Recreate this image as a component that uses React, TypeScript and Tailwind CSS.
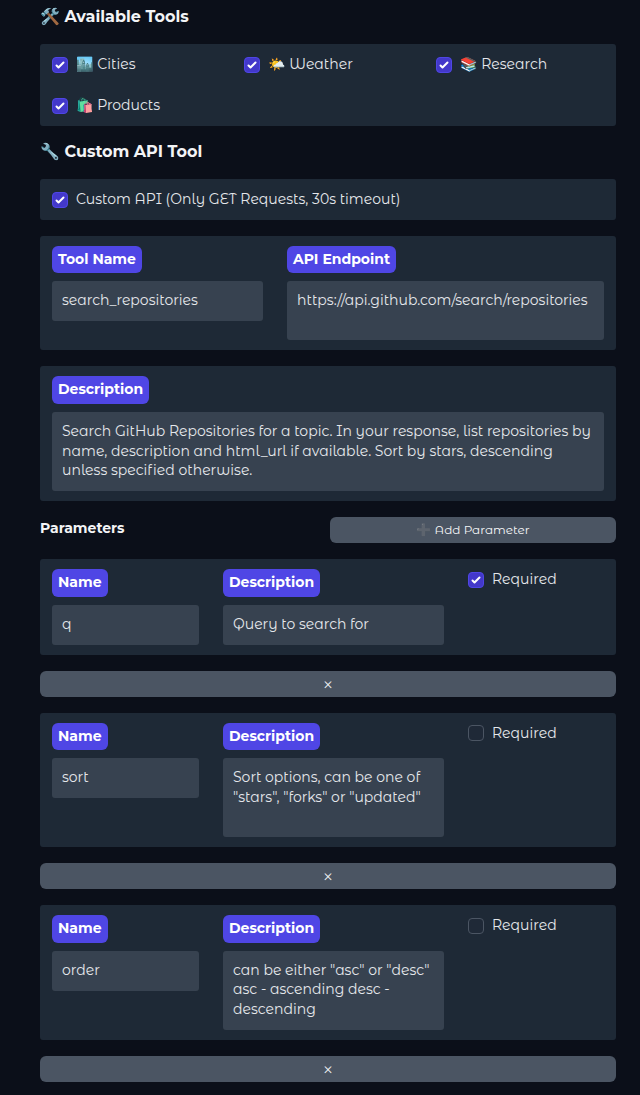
type ParamRow = {
  name: string;
  lines: string[];
  required: boolean;
  pill: string;
  box: string;
  height: string;
  pad: string;
  checkTop: string;
};

const params: ParamRow[] = [
  { name: 'q', lines: ['Query to search for'], required: true, pill: 'h-[28px]', box: 'h-[40px]', height: 'h-[96px]', pad: 'pt-[10px]', checkTop: 'mt-[3px]' },
  { name: 'sort', lines: ['Sort options, can be one of', '"stars", "forks" or "updated"'], required: false, pill: 'h-[27px]', box: 'h-[79px]', height: 'h-[134px]', pad: 'pt-[10px]', checkTop: 'mt-[2px]' },
  { name: 'order', lines: ['can be either "asc" or "desc"', 'asc - ascending desc -', 'descending'], required: false, pill: 'h-[28px]', box: 'h-[79px]', height: 'h-[135px]', pad: 'pt-[9.75px]', checkTop: 'mt-[3px]' },
];

function Check({ checked, label, emoji, top = 'mt-[3px]' }: { checked: boolean; label: string; emoji?: string; top?: string }) {
  return (
    <label className="flex h-[20px] items-start text-[14px] leading-[20px]">
      <span
        className={
          top +
          (checked
            ? ' flex h-[16px] w-[16px] shrink-0 items-center justify-center rounded-[4px] border border-[#4f46e5] bg-[#4338ca]'
            : ' flex h-[16px] w-[16px] shrink-0 rounded-[4px] border border-[#4b5563] bg-[#1f2937]')
        }
      >
        {checked && (
          <svg viewBox="0 0 16 16" className="h-[16px] w-[16px] shrink-0" fill="white">
            <path d="M12.207 4.793a1 1 0 010 1.414l-5 5a1 1 0 01-1.414 0l-2-2a1 1 0 011.414-1.414L6.5 9.086l4.293-4.293a1 1 0 011.414 0z" />
          </svg>
        )}
      </span>
      {emoji && <span className="ml-[8px] whitespace-pre">{emoji + ' '}</span>}
      <span className={emoji ? 'ml-[0.5px]' : 'ml-[8px]'}>{label}</span>
    </label>
  );
}

function Pill({ text, height }: { text: string; height: string }) {
  return (
    <div className={height + " w-fit rounded-[6px] bg-[#4f46e5] px-[6px] pt-[3px] font-['Montserrat','Open_Sans',sans-serif] text-[14px] leading-[20px] font-bold text-white"}>
      {text}
    </div>
  );
}

function Field({ lines, height, pad = 'pt-[10px]' }: { lines: string[]; height: string; pad?: string }) {
  return (
    <div className={height + ' ' + pad + ' mt-[8px] rounded-[3px] bg-[#374250] px-[10px] text-[14px] leading-[19.6px] whitespace-nowrap'}>
      {lines.map((line) => (
        <div key={line}>{line}</div>
      ))}
    </div>
  );
}

function Title({ emoji, text }: { emoji: string; text: string }) {
  return (
    <h3 className="font-['Montserrat','Open_Sans',sans-serif] text-[16px] leading-[24px] font-bold text-[#f3f4f6]">
      {emoji} {text}
    </h3>
  );
}

export default function App() {
  return (
    <main className="flex h-[1095px] w-[640px] flex-col overflow-hidden bg-[#0b0f19] px-[24px] pl-[40px] pt-[5px] font-['Montserrat_Alternates','Open_Sans',sans-serif] text-[14px] text-[#e5e7eb]">
      <Title emoji="🛠️" text="Available Tools" />
      <section className="mt-[15px] grid h-[82px] grid-cols-[192px_192px_1fr] content-start gap-y-[21px] rounded-[3px] bg-[#1e2936] px-[12px] pt-[10px]">
        <Check checked emoji="🏙️" label="Cities" />
        <Check checked emoji="🌤️" label="Weather" />
        <Check checked emoji="📚" label="Research" />
        <Check checked emoji="🛍️" label="Products" />
      </section>
      <div className="mt-[14px]">
        <Title emoji="🔧" text="Custom API Tool" />
      </div>
      <section className="mt-[15px] h-[41px] rounded-[3px] bg-[#1e2936] px-[12px] pt-[10px]">
        <Check checked label="Custom API (Only GET Requests, 30s timeout)" />
      </section>
      <section className="mt-[16px] grid h-[114px] grid-cols-[211px_317px] gap-x-[24px] rounded-[3px] bg-[#1e2936] px-[12px] pt-[10px]">
        <div>
          <Pill text="Tool Name" height="h-[27px]" />
          <Field lines={['search_repositories']} height="h-[40px]" />
        </div>
        <div>
          <Pill text="API Endpoint" height="h-[27px]" />
          <Field lines={['https://api.github.com/search/repositories']} height="h-[59px]" />
        </div>
      </section>
      <section className="mt-[16px] h-[135px] rounded-[3px] bg-[#1e2936] px-[12px] pt-[10px]">
        <Pill text="Description" height="h-[28px]" />
        <Field
          lines={[
            'Search GitHub Repositories for a topic. In your response, list repositories by',
            'name, description and html_url if available. Sort by stars, descending',
            'unless specified otherwise.',
          ]}
          height="h-[79px]"
        />
      </section>
      <div className="mt-[16px] grid h-[26px] grid-cols-[274px_286px] gap-x-[16px]">
        <h4 className="font-['Montserrat','Open_Sans',sans-serif] text-[14px] leading-[22px] font-bold text-[#f3f4f6]">Parameters</h4>
        <button className="h-[26px] rounded-[6px] bg-[#4b5563] text-[12px] leading-[26px] text-[#f3f4f6]">
          <span className="opacity-40 brightness-125">➕</span> Add Parameter
        </button>
      </div>
      {params.map((p) => (
        <div key={p.name}>
          <section className={p.height + ' mt-[16px] grid grid-cols-[147px_221px_1fr] gap-x-[24px] rounded-[3px] bg-[#1e2936] px-[12px] pt-[10px]'}>
            <div>
              <Pill text="Name" height={p.pill} />
              <Field lines={[p.name]} height="h-[40px]" />
            </div>
            <div>
              <Pill text="Description" height={p.pill} />
              <Field lines={p.lines} height={p.box} pad={p.pad} />
            </div>
            <Check checked={p.required} label="Required" top={p.checkTop} />
          </section>
          <button className="mt-[16px] block h-[26px] w-full rounded-[6px] bg-[#4b5563] pt-[1px] text-[21px] leading-[25px] font-light text-[#f3f4f6]">×</button>
        </div>
      ))}
    </main>
  );
}
